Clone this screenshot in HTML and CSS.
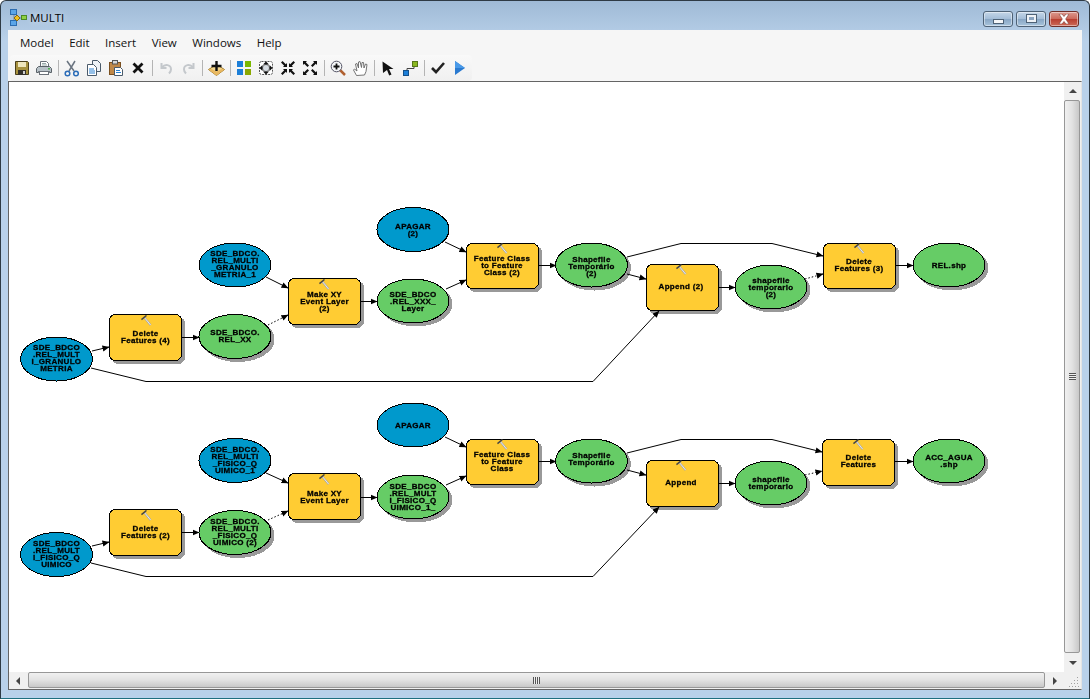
FILE: index.html
```html
<!DOCTYPE html>
<html lang="en">
<head>
    <meta charset="UTF-8">
    <title>MULTI</title>
    <link rel="stylesheet" href="styles.css">
</head>
<body>

<div class="window">
    <div class="titlebar">
        <svg class="app-icon" width="17" height="17" viewBox="0 0 17 17">
            <path d="M4 5v9M4 9h8" stroke="#7a8a9a" fill="none"/>
            <rect x="0.5" y="0.5" width="6" height="5" fill="#5aa5e8" stroke="#2b6cb0"/>
            <rect x="0.5" y="11.5" width="6" height="5" fill="#5aa5e8" stroke="#2b6cb0"/>
            <path d="M7 6l3 3-3 3-3-3z" fill="#f0c020" stroke="#8a6a10"/>
            <rect x="11.5" y="6.5" width="5" height="4" fill="#8fd040" stroke="#4a8a20"/>
        </svg>
        <span class="title-text">MULTI</span>
        <div class="caption-buttons">
            <div class="caption-btn"><span class="glyph-min"></span></div>
            <div class="caption-btn"><span class="glyph-max"></span></div>
            <div class="caption-btn caption-close">
                <svg width="12" height="10" viewBox="0 0 12 10"><path d="M1 0h3l2 2.500L8 0h3L7.700 5 11 10H8L6 7.500 4 10H1l3.300-5z" fill="#fff" stroke="#7a3a30" stroke-width=".6"/></svg>
            </div>
        </div>
    </div>

    <div class="client">
        <div class="menubar">
            <span class="menu-item">Model</span>
            <span class="menu-item">Edit</span>
            <span class="menu-item">Insert</span>
            <span class="menu-item">View</span>
            <span class="menu-item">Windows</span>
            <span class="menu-item">Help</span>
        </div>

        <div class="toolbar">
            <div class="tool"><svg width="16" height="16" viewBox="0 0 16 16"><path d="M1.500 1.500h12l1 1v12h-13z" fill="#a8923e" stroke="#4a3f1a"/><rect x="4" y="2" width="8" height="5" fill="#efe6bc"/><rect x="4" y="10" width="8" height="5" fill="#33302a"/><rect x="9" y="11" width="2" height="3" fill="#cfcfcf"/></svg></div>
            <div class="tool"><svg width="18" height="16" viewBox="0 0 18 16"><path d="M5.500 6.500v-5h6l2 2v3" fill="#fff" stroke="#6a7078"/><path d="M7 3.500h4M7 5h5" stroke="#9aa" fill="none"/><path d="M3.500 6.500h11l2 2v4h-2v-1h-11v1h-2v-4z" fill="#b8c2c8" stroke="#5a6268"/><rect x="4.500" y="11.500" width="9" height="3" fill="#fff" stroke="#6a7078"/><rect x="13" y="8" width="2" height="1.500" fill="#50b050"/></svg></div>
            <span class="tool-sep"></span>
            <div class="tool"><svg width="16" height="17" viewBox="0 0 16 17"><path d="M3 1l7 10M11 1L5 11" stroke="#6a7480" stroke-width="1.500" fill="none"/><circle cx="3.500" cy="13.500" r="2.300" fill="none" stroke="#2a6cb8" stroke-width="1.500"/><circle cx="12" cy="13.500" r="2.300" fill="none" stroke="#2a6cb8" stroke-width="1.500"/></svg></div>
            <div class="tool"><svg width="16" height="16" viewBox="0 0 16 16"><path d="M6.500.5h5l3 3v8h-8z" fill="#eef2f6" stroke="#4a5a6a"/><path d="M1.500 4.500h6l3 3v8h-9z" fill="#fff" stroke="#4a5a6a"/><path d="M3 9h5M3 11h6M3 13h6" stroke="#2a80d0"/></svg></div>
            <div class="tool"><svg width="16" height="16" viewBox="0 0 16 16"><rect x="1.500" y="2.500" width="11" height="12" fill="#c08848" stroke="#7a5020"/><rect x="4.500" y="0.500" width="5" height="3.500" fill="#d8d8d8" stroke="#555"/><path d="M6.500 7.500h6l2 2v6h-8z" fill="#fff" stroke="#4a5a6a"/><path d="M8 10.500h4M8 12.500h5" stroke="#2a80d0"/></svg></div>
            <div class="tool"><svg width="12" height="12" viewBox="0 0 12 12"><path d="M1.500 1.500l9 9M10.500 1.500l-9 9" stroke="#111" stroke-width="2.800"/></svg></div>
            <span class="tool-sep"></span>
            <div class="tool"><svg width="15" height="14" viewBox="0 0 15 14"><path d="M2.500 2v5h5M3 6.500c3-4 9-3 9 2 0 2-1 3-2 4" fill="none" stroke="#c4c8cc" stroke-width="2"/></svg></div>
            <div class="tool"><svg width="15" height="14" viewBox="0 0 15 14"><path d="M12.500 2v5h-5M12 6.500c-3-4-9-3-9 2 0 2 1 3 2 4" fill="none" stroke="#c4c8cc" stroke-width="2"/></svg></div>
            <span class="tool-sep"></span>
            <div class="tool"><svg width="17" height="17" viewBox="0 0 17 17"><path d="M8.500 4.500l8 5-8 6-8-6z" fill="#f4d890" stroke="#a07828"/><path d="M8.500 11.500l5-2.500 3 .5-8 6-8-6 3-.5z" fill="#e8b860"/><path d="M8.500 1v10M3.500 6h10" stroke="#111" stroke-width="2.400"/></svg></div>
            <span class="tool-sep"></span>
            <div class="tool"><svg width="14" height="14" viewBox="0 0 14 14"><rect width="6" height="6" fill="#1c7fd8"/><rect x="8" width="6" height="6" fill="#7ab800"/><rect y="8" width="6" height="6" fill="#1c7fd8"/><rect x="8" y="8" width="6" height="6" fill="#8aa800"/></svg></div>
            <div class="tool"><svg width="16" height="16" viewBox="0 0 16 16"><rect x="1.500" y="1.500" width="13" height="13" rx="2" fill="#fff" stroke="#555" stroke-dasharray="2 1"/><circle cx="8" cy="8" r="3.500" fill="#d8dee4" stroke="#777"/><path d="M8 1.500l3 3H5zM8 14.500l3-3H5zM1.500 8l3-3v6zM14.500 8l-3-3v6z" fill="#111"/></svg></div>
            <div class="tool"><svg width="14" height="14" viewBox="0 0 14 14"><path id="arrow-in" d="M6 6H2l1.200-1.200L0 1.500 1.500 0l3.300 3.200L6 2z" fill="#111"/><use href="#arrow-in" transform="matrix(-1 0 0 1 14 0)"/><use href="#arrow-in" transform="matrix(1 0 0 -1 0 14)"/><use href="#arrow-in" transform="matrix(-1 0 0 -1 14 14)"/></svg></div>
            <div class="tool"><svg width="14" height="14" viewBox="0 0 14 14"><path id="arrow-out" d="M0 0h4L2.800 1.200 6 4.500 4.500 6 1.200 2.800 0 4z" fill="#111"/><use href="#arrow-out" transform="matrix(-1 0 0 1 14 0)"/><use href="#arrow-out" transform="matrix(1 0 0 -1 0 14)"/><use href="#arrow-out" transform="matrix(-1 0 0 -1 14 14)"/></svg></div>
            <span class="tool-sep"></span>
            <div class="tool"><svg width="16" height="16" viewBox="0 0 16 16"><path d="M10 10l5 5" stroke="#b06030" stroke-width="2.500"/><circle cx="6.500" cy="6.500" r="5.300" fill="#f4f6f8" stroke="#556"/><path d="M6.500 3.500v6M3.500 6.500h6" stroke="#111" stroke-width="1.800"/></svg></div>
            <div class="tool"><svg width="17" height="17" viewBox="0 0 17 17"><path d="M4.500 15.500L1.500 10l1-1 2.500 2L3.500 4l1.500-.5L6.500 8 6.500 2l1.500-.5L9.500 7.500 10 2.500l1.500 0 .5 5.500 1.500-4 1.500.5-1 7-1.500 3.500z" fill="#fff" stroke="#666" stroke-width=".9"/></svg></div>
            <span class="tool-sep"></span>
            <div class="tool"><svg width="12" height="15" viewBox="0 0 12 15"><path d="M.5.500L11.500 8H7l2.500 5.500-2.300 1L5 9l-4 3z" fill="#111"/></svg></div>
            <div class="tool"><svg width="15" height="15" viewBox="0 0 15 15"><path d="M4 10V7.500h7V3" fill="none" stroke="#444"/><rect x="0.500" y="9.500" width="5" height="5" fill="#1c7fd8" stroke="#14508a"/><rect x="9.500" y="0.500" width="5" height="5" fill="#8ab820" stroke="#56761a"/></svg></div>
            <span class="tool-sep"></span>
            <div class="tool"><svg width="14" height="12" viewBox="0 0 14 12"><path d="M1 6l4 4 8-9" fill="none" stroke="#222" stroke-width="2.600"/></svg></div>
            <div class="tool"><svg width="10" height="14" viewBox="0 0 10 14"><path d="M0 0l10 7-10 7z" fill="#2a7ad0"/><path d="M0 0l10 7H0z" fill="#4a9ae8"/></svg></div>
        </div>

        <div class="workspace">
            <div class="canvas">
                <svg class="diagram" width="1056" height="591" viewBox="9 82 1056 591">
                    <defs>
                        <marker id="arrow" markerWidth="7" markerHeight="7" refX="6.500" refY="3.500" orient="auto" markerUnits="userSpaceOnUse">
                            <path d="M0 .5L7 3.500 0 6.500z" fill="#000"/>
                        </marker>
                        <symbol id="hammer" viewBox="0 0 12 12">
                            <path d="M3.500 2.500l7 8.500" stroke="#a8a8a8" stroke-width="2.200"/>
                            <path d="M3.500 2.500l7 8.500" stroke="#fff" stroke-width=".8"/>
                            <path d="M.5 5L6 .5" stroke="#444" stroke-width="1.600"/>
                        </symbol>
                    </defs>

                    <!-- nodes, top model -->
                    <ellipse class="data-in" cx="56.500" cy="359" rx="36" ry="22"/>
                    <text class="label" y="350.300"><tspan x="56.500">SDE_BDCO</tspan><tspan x="56.500" dy="7">.REL_MULT</tspan><tspan x="56.500" dy="7">I_GRANULO</tspan><tspan x="56.500" dy="7">METRIA</tspan></text>

                    <rect class="tool-box" x="109.500" y="314.500" width="72" height="46" rx="6"/>
                    <use href="#hammer" x="141" y="315" width="11" height="11"/>
                    <text class="label" y="336"><tspan x="145.500">Delete</tspan><tspan x="145.500" dy="7">Features (4)</tspan></text>

                    <ellipse class="data-in" cx="235" cy="265" rx="36" ry="22"/>
                    <text class="label" y="256.300"><tspan x="235">SDE_BDCO.</tspan><tspan x="235" dy="7">REL_MULTI</tspan><tspan x="235" dy="7">_GRANULO</tspan><tspan x="235" dy="7">METRIA_1</tspan></text>

                    <ellipse class="data-out" cx="235" cy="336.500" rx="36" ry="22"/>
                    <text class="label" y="335.300"><tspan x="235">SDE_BDCO.</tspan><tspan x="235" dy="7">REL_XX</tspan></text>

                    <rect class="tool-box" x="288.500" y="278.500" width="72" height="46" rx="6"/>
                    <use href="#hammer" x="319" y="279" width="11" height="11"/>
                    <text class="label" y="296.500"><tspan x="324.500">Make XY</tspan><tspan x="324.500" dy="7">Event Layer</tspan><tspan x="324.500" dy="7">(2)</tspan></text>

                    <ellipse class="data-in" cx="413" cy="229.500" rx="36" ry="22"/>
                    <text class="label" y="228.500"><tspan x="413">APAGAR</tspan><tspan x="413" dy="7">(2)</tspan></text>

                    <ellipse class="data-out" cx="413" cy="301" rx="36" ry="22"/>
                    <text class="label" y="297"><tspan x="413">SDE_BDCO</tspan><tspan x="413" dy="7">.REL_XXX_</tspan><tspan x="413" dy="7">Layer</tspan></text>

                    <rect class="tool-box" x="466.500" y="243.500" width="72" height="45" rx="6"/>
                    <use href="#hammer" x="497" y="243" width="11" height="11"/>
                    <text class="label" y="260.700"><tspan x="502">Feature Class</tspan><tspan x="502" dy="7">to Feature</tspan><tspan x="502" dy="7">Class (2)</tspan></text>

                    <ellipse class="data-out" cx="591.500" cy="265" rx="36" ry="22"/>
                    <text class="label" y="261.700"><tspan x="591.500">Shapefile</tspan><tspan x="591.500" dy="7">Temporário</tspan><tspan x="591.500" dy="7">(2)</tspan></text>

                    <rect class="tool-box" x="646.500" y="264.500" width="72" height="46" rx="6"/>
                    <use href="#hammer" x="676" y="264" width="11" height="11"/>
                    <text class="label" y="289"><tspan x="681">Append (2)</tspan></text>

                    <ellipse class="data-out" cx="771" cy="287" rx="36" ry="22"/>
                    <text class="label" y="283"><tspan x="771">shapefile</tspan><tspan x="771" dy="7">temporario</tspan><tspan x="771" dy="7">(2)</tspan></text>

                    <rect class="tool-box" x="823.500" y="243.500" width="72" height="45" rx="6"/>
                    <use href="#hammer" x="854" y="243" width="11" height="11"/>
                    <text class="label" y="264"><tspan x="859">Delete</tspan><tspan x="859" dy="7">Features (3)</tspan></text>

                    <ellipse class="data-out" cx="949" cy="265" rx="36" ry="22"/>
                    <text class="label" y="268"><tspan x="949">REL.shp</tspan></text>

                    <!-- nodes, bottom model -->
                    <ellipse class="data-in" cx="56.500" cy="554.500" rx="36" ry="22"/>
                    <text class="label" y="546"><tspan x="56.500">SDE_BDCO</tspan><tspan x="56.500" dy="7">.REL_MULT</tspan><tspan x="56.500" dy="7">I_FISICO_Q</tspan><tspan x="56.500" dy="7">UIMICO</tspan></text>

                    <rect class="tool-box" x="109.500" y="509.500" width="72" height="46" rx="6"/>
                    <use href="#hammer" x="141" y="510" width="11" height="11"/>
                    <text class="label" y="531"><tspan x="145.500">Delete</tspan><tspan x="145.500" dy="7">Features (2)</tspan></text>

                    <ellipse class="data-in" cx="235" cy="460.500" rx="36" ry="22"/>
                    <text class="label" y="452"><tspan x="235">SDE_BDCO.</tspan><tspan x="235" dy="7">REL_MULTI</tspan><tspan x="235" dy="7">_FISICO_Q</tspan><tspan x="235" dy="7">UIMICO_1</tspan></text>

                    <ellipse class="data-out" cx="235" cy="532.500" rx="36" ry="22"/>
                    <text class="label" y="524"><tspan x="235">SDE_BDCO.</tspan><tspan x="235" dy="7">REL_MULTI</tspan><tspan x="235" dy="7">_FISICO_Q</tspan><tspan x="235" dy="7">UIMICO (2)</tspan></text>

                    <rect class="tool-box" x="288.500" y="473.500" width="72" height="46" rx="6"/>
                    <use href="#hammer" x="319" y="474" width="11" height="11"/>
                    <text class="label" y="495.500"><tspan x="324.500">Make XY</tspan><tspan x="324.500" dy="7">Event Layer</tspan></text>

                    <ellipse class="data-in" cx="413" cy="425" rx="36" ry="22"/>
                    <text class="label" y="428"><tspan x="413">APAGAR</tspan></text>

                    <ellipse class="data-out" cx="413" cy="497" rx="36" ry="22"/>
                    <text class="label" y="488.500"><tspan x="413">SDE_BDCO</tspan><tspan x="413" dy="7">.REL_MULT</tspan><tspan x="413" dy="7">I_FISICO_Q</tspan><tspan x="413" dy="7">UIMICO_1_</tspan></text>

                    <rect class="tool-box" x="466.500" y="439.500" width="72" height="45" rx="6"/>
                    <use href="#hammer" x="497" y="439" width="11" height="11"/>
                    <text class="label" y="456.700"><tspan x="502">Feature Class</tspan><tspan x="502" dy="7">to Feature</tspan><tspan x="502" dy="7">Class</tspan></text>

                    <ellipse class="data-out" cx="591.500" cy="461" rx="36" ry="22"/>
                    <text class="label" y="457.700"><tspan x="591.500">Shapefile</tspan><tspan x="591.500" dy="7">Temporário</tspan></text>

                    <rect class="tool-box" x="646.500" y="460.500" width="72" height="46" rx="6"/>
                    <use href="#hammer" x="676" y="460" width="11" height="11"/>
                    <text class="label" y="485"><tspan x="681">Append</tspan></text>

                    <ellipse class="data-out" cx="771" cy="483" rx="36" ry="22"/>
                    <text class="label" y="481.500"><tspan x="771">shapefile</tspan><tspan x="771" dy="7">temporario</tspan></text>

                    <rect class="tool-box" x="822.500" y="439.500" width="72" height="46" rx="6"/>
                    <use href="#hammer" x="853" y="439" width="11" height="11"/>
                    <text class="label" y="460"><tspan x="858.500">Delete</tspan><tspan x="858.500" dy="7">Features</tspan></text>

                    <ellipse class="data-out" cx="949" cy="461" rx="36" ry="22"/>
                    <text class="label" y="460"><tspan x="949">ACC_AGUA</tspan><tspan x="949" dy="7">.shp</tspan></text>

                    <!-- connectors, top model -->
                    <path class="link" d="M92 351L109 347"/>
                    <path class="link" d="M182 337.500H199"/>
                    <path class="link" d="M266 277L288 288"/>
                    <path class="link dotted" d="M268 325L288 315"/>
                    <path class="link" d="M360 301.500H377"/>
                    <path class="link" d="M445 242L466 252"/>
                    <path class="link" d="M446 289L466 280"/>
                    <path class="link" d="M538 265.500H556"/>
                    <path class="link" d="M627 274L646 279"/>
                    <path class="link" d="M718 287.500H735"/>
                    <path class="link dotted" d="M805 279L823 274"/>
                    <path class="link" d="M627 257L681 243.500H772L823 256"/>
                    <path class="link" d="M896 265.500H913"/>
                    <path class="link" d="M91 368L146 381.500H593L659 311"/>

                    <!-- connectors, bottom model -->
                    <path class="link" d="M92 546L109 542"/>
                    <path class="link" d="M182 532.500H199"/>
                    <path class="link" d="M266 473L288 483"/>
                    <path class="link dotted" d="M268 520L288 511"/>
                    <path class="link" d="M360 497.500H377"/>
                    <path class="link" d="M445 437L466 447"/>
                    <path class="link" d="M446 485L466 476"/>
                    <path class="link" d="M538 461.500H556"/>
                    <path class="link" d="M627 470L646 475"/>
                    <path class="link" d="M718 483.500H735"/>
                    <path class="link dotted" d="M805 475L822 471"/>
                    <path class="link" d="M627 453L681 439.500H772L822 452"/>
                    <path class="link" d="M895 461.500H913"/>
                    <path class="link" d="M91 563L146 576.500H593L659 507"/>
                </svg>
            </div>

            <div class="vscroll">
                <div class="scroll-btn btn-top"><span class="arrow-up"></span></div>
                <div class="vthumb"><span class="vgrip"></span></div>
                <div class="scroll-btn btn-bottom"><span class="arrow-down"></span></div>
            </div>
            <div class="hscroll">
                <div class="scroll-btn btn-side"><span class="arrow-left"></span></div>
                <div class="hthumb"><span class="hgrip"></span></div>
                <div class="scroll-btn btn-side"><span class="arrow-right"></span></div>
            </div>
            <div class="size-grip">
                <svg width="10" height="10" viewBox="0 0 10 10"><path d="M8 0h1v1H8zM5 3h1v1H5zM8 3h1v1H8zM2 6h1v1H2zM5 6h1v1H5zM8 6h1v1H8zM0 9h1v1H0zM3 9h1v1H3zM6 9h1v1H6zM9 9h1v1H9z" fill="#a0a0a0"/></svg>
            </div>
        </div>
    </div>
</div>

</body>
</html>
```

FILE: styles.css
```css
html, body {
    margin: 0;
    height: 100%;
    background-color: #fff;
    overflow: hidden;
}
.window {
    box-sizing: border-box;
    width: 1090px;
    height: 699px;
    display: flex;
    flex-direction: column;
    padding: 0 7px 8px;
    border: 1px solid #2e3a44;
    border-bottom-color: #1f6f80;
    border-radius: 6px 6px 0 0;
    background: linear-gradient(to bottom, #9fbad6 0, #b9d1ea 40px);
    font-family: "Open Sans", "Noto Sans", sans-serif;
}
.titlebar {
    height: 29px;
    flex: none;
    display: flex;
    align-items: center;
    padding-right: 3px;
}
.app-icon {
    margin: 3px 3px 0 2px;
}
.title-text {
    font-size: 11.5px;
    color: #000;
    text-shadow: 0 0 6px rgba(255, 255, 255, .7);
    margin-top: 4px;
}
.caption-buttons {
    margin-left: auto;
    display: flex;
    gap: 3px;
    margin-top: 6px;
}
.caption-btn {
    box-sizing: border-box;
    width: 30px;
    height: 16px;
    border: 1px solid #4e6276;
    border-radius: 3px;
    background: linear-gradient(to bottom, #c4d6e8 0, #a4bed8 48%, #88a6c4 52%, #a8c4dc 100%);
    box-shadow: inset 0 0 0 1px rgba(255, 255, 255, .45);
    display: flex;
    align-items: center;
    justify-content: center;
}
.caption-close {
    border-color: #6e2e28;
    background: linear-gradient(to bottom, #dc9a90 0, #cc6a5c 48%, #b83e30 52%, #cc6a58 100%);
}
.glyph-min {
    box-sizing: border-box;
    display: block;
    width: 11px;
    height: 5px;
    margin-top: 5px;
    background-color: #f4f6f8;
    border: 1px solid #4e6276;
}
.glyph-max {
    box-sizing: border-box;
    display: block;
    width: 11px;
    height: 9px;
    background-color: #8aa4c0;
    border: 1px solid #4e6276;
    box-shadow: inset 0 0 0 2px #eef2f6;
}
.client {
    flex: 1;
    min-height: 0;
    display: flex;
    flex-direction: column;
    background-color: #f6f6f6;
}
.menubar {
    height: 25px;
    flex: none;
    display: flex;
    align-items: center;
    font-size: 11.5px;
    color: #111;
    padding-left: 12px;
}
.menu-item {
    margin-right: 15.5px;
}
.toolbar {
    height: 26px;
    flex: none;
    align-self: flex-start;
    box-sizing: border-box;
    display: flex;
    align-items: center;
    padding: 0 1px;
    margin-left: 2px;
    border-radius: 4px;
    background: linear-gradient(to bottom, #f9f9f9 0, #f0f0f0 100%);
}
.tool {
    width: 22px;
    height: 22px;
    display: flex;
    align-items: center;
    justify-content: center;
}
.tool-sep {
    width: 6px;
    display: flex;
    justify-content: center;
}
.tool-sep::before {
    content: "";
    width: 1px;
    height: 16px;
    background-color: #b4b4b4;
}
.workspace {
    flex: 1;
    min-height: 0;
    display: grid;
    grid-template-columns: 1fr 17px;
    grid-template-rows: 1fr 17px;
    border: 1px solid #646464;
    border-right-color: #e4e4e4;
}
.canvas {
    background-color: #fff;
    overflow: hidden;
}
.diagram {
    display: block;
}
.link {
    fill: none;
    stroke: #000;
    stroke-width: 1;
    marker-end: url(#arrow);
}
.dotted {
    stroke-dasharray: 1.5 2;
}
.data-in {
    fill: #0099cc;
    stroke: #000;
    shape-rendering: crispEdges;
}
.data-out {
    fill: #66cc66;
    stroke: #000;
    shape-rendering: crispEdges;
    filter: drop-shadow(3px 3px 0 #999);
}
.tool-box {
    fill: #ffcc33;
    stroke: #000;
    shape-rendering: crispEdges;
    filter: drop-shadow(3px 3px 0 #999);
}
.label {
    font-family: "Liberation Sans", Arial, sans-serif;
    font-size: 8px;
    font-weight: 700;
    letter-spacing: .3px;
    text-anchor: middle;
    fill: #000;
    stroke: #000;
    stroke-width: .3;
    filter: blur(.2px);
}
.vscroll {
    display: flex;
    flex-direction: column;
    background-color: #f0f0f0;
}
.hscroll {
    display: flex;
    background-color: #f0f0f0;
}
.scroll-btn {
    flex: none;
    width: 17px;
    height: 17px;
    display: flex;
    align-items: center;
    justify-content: center;
}
.btn-top {
    height: 18px;
}
.btn-bottom {
    height: 19px;
}
.btn-side {
    width: 18px;
}
.vthumb {
    flex: 1;
    box-sizing: border-box;
    margin: 0 1px 0 0;
    border: 1px solid #979797;
    border-radius: 2px;
    background: linear-gradient(to right, #f0f0f0 0, #e2e2e2 50%, #c8c8c8 100%);
    display: flex;
    align-items: center;
    justify-content: center;
}
.hthumb {
    flex: 1;
    box-sizing: border-box;
    margin: 0 1px 1px 1px;
    border: 1px solid #979797;
    border-radius: 2px;
    background: linear-gradient(to bottom, #f0f0f0 0, #e2e2e2 50%, #c8c8c8 100%);
    display: flex;
    align-items: center;
    justify-content: center;
}
.vgrip {
    width: 7px;
    height: 7px;
    background: repeating-linear-gradient(to bottom, #555 0, #555 1px, #eee 1px, #eee 2px);
}
.hgrip {
    width: 7px;
    height: 7px;
    background: repeating-linear-gradient(to right, #555 0, #555 1px, #eee 1px, #eee 2px);
}
.arrow-up {
    border: 4px solid transparent;
    border-top-width: 0;
    border-bottom: 4px solid #444;
}
.arrow-down {
    border: 4px solid transparent;
    border-bottom-width: 0;
    border-top: 4px solid #444;
}
.arrow-left {
    border: 4px solid transparent;
    border-left-width: 0;
    border-right: 4px solid #444;
}
.arrow-right {
    border: 4px solid transparent;
    border-right-width: 0;
    border-left: 4px solid #444;
}
.size-grip {
    background-color: #f0f0f0;
    display: flex;
    align-items: flex-end;
    justify-content: flex-end;
    padding: 0 2px 2px 0;
}
```
